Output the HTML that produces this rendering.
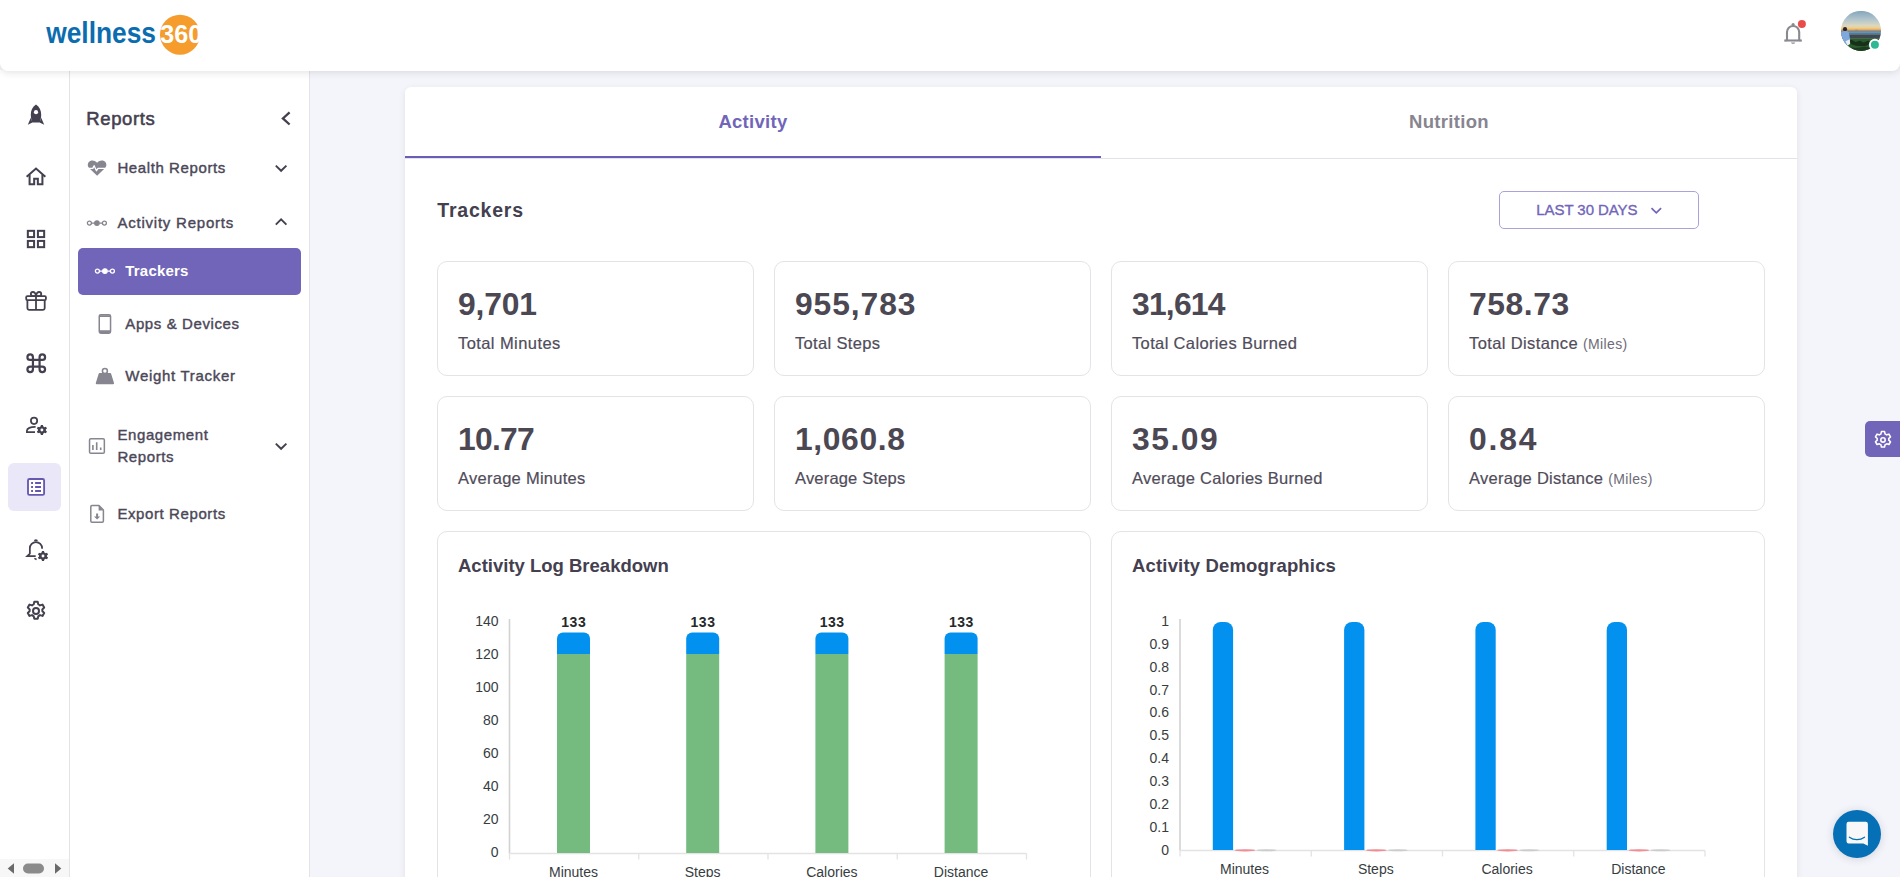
<!DOCTYPE html>
<html lang="en">
<head>
<meta charset="utf-8">
<title>Trackers - Wellness360</title>
<style>
*{box-sizing:border-box;margin:0;padding:0}
html,body{width:1900px;height:877px;overflow:hidden}
body{background:#f4f5fa;font-family:"Liberation Sans",Arial,sans-serif;color:#444050;position:relative}
.abs{position:absolute}
/* header */
#hdr{position:absolute;left:0;top:0;width:1900px;height:71px;background:#fff;border-radius:0 0 8px 8px;box-shadow:0 2px 7px rgba(47,43,61,.12);z-index:10}
/* rail */
#rail{position:absolute;left:0;top:70px;width:70px;height:807px;background:#fff;border-right:1px solid #e4e4e8}
#side{position:absolute;left:70px;top:70px;width:240px;height:807px;background:#fff;border-right:1px solid #e4e4e8}
.ico{position:absolute;width:22px;height:22px;left:25px}
.ico svg{display:block}
/* sidebar menu */
.mi{position:absolute;left:117.400px;font-size:15px;color:#4b4758;white-space:nowrap;letter-spacing:.6px;-webkit-text-stroke:.4px #4b4758}
/* main card */
#card{position:absolute;left:405px;top:87px;width:1392px;height:820px;background:#fff;border-radius:6px;box-shadow:0 2px 6px rgba(47,43,61,.10)}
.tab{position:absolute;top:0;height:71px;width:696px;text-align:center;line-height:69px;font-size:18.500px;font-weight:bold;letter-spacing:.3px}
.stat{position:absolute;width:317px;height:115px;border:1px solid #e4e4e6;border-radius:10px;background:#fff}
.stat b{position:absolute;left:20px;top:24px;font-size:31.500px;line-height:36px;font-weight:bold;color:#4b4753;white-space:nowrap;transform:scaleX(1.01);transform-origin:0 0}
.stat span{position:absolute;left:20px;top:70.100px;font-size:16.500px;line-height:22px;color:#504c5a;white-space:nowrap;-webkit-text-stroke:.2px #504c5a}
.stat span small{font-size:14px;color:#6d6b77;-webkit-text-stroke:0;letter-spacing:.38px;margin-left:0}
.cc{position:absolute;width:654px;height:360px;border:1px solid #e4e4e6;border-radius:10px;background:#fff}
.cc h5{position:absolute;left:20px;top:22px;font-size:18.500px;line-height:24px;font-weight:bold;color:#444050;white-space:nowrap}
svg text{font-family:"Liberation Sans",Arial,sans-serif}
</style>
</head>
<body>
<div id="rail"></div>
<div class="abs" style="left:8px;top:463px;width:53px;height:48px;border-radius:6px;background:#e9e7f8"></div>
<!-- rocket -->
<svg class="abs" style="left:25px;top:103px" width="22" height="24" viewBox="0 0 22 24">
<path d="M11 1.600c3.700 2.400 5.200 6.100 5.200 10.100 0 2.800-.6 5.400-1.500 7.700H7.300c-.9-2.300-1.500-4.900-1.500-7.700 0-4 1.500-7.700 5.200-10.100z" fill="#444050"/>
<circle cx="11" cy="9.200" r="2.100" fill="#fff"/>
<path d="M5.800 14.800l-3 7 4.600-2.400zM16.200 14.800l3 7-4.600-2.400z" fill="#444050"/>
</svg>
<!-- home -->
<svg class="abs" style="left:25px;top:166px" width="22" height="22" viewBox="0 0 24 24" fill="none" stroke="#444050" stroke-width="2.200">
<path d="M1.800 11.800L12 2.800l10.200 9"/>
<path d="M5 9.500V20h5v-6h4v6h5V9.500"/>
</svg>
<!-- grid -->
<svg class="abs" style="left:25px;top:228px" width="22" height="22" viewBox="0 0 24 24" fill="none" stroke="#444050" stroke-width="2.200">
<rect x="3.100" y="3.100" width="6.800" height="6.800"/><rect x="14.100" y="3.100" width="6.800" height="6.800"/><rect x="3.100" y="14.100" width="6.800" height="6.800"/><rect x="14.100" y="14.100" width="6.800" height="6.800"/>
</svg>
<!-- gift -->
<svg class="abs" style="left:20px;top:285px" width="32" height="32" viewBox="0 0 32 32" fill="none" stroke="#444050" stroke-width="1.800" stroke-linejoin="round">
<rect x="6.200" y="11.100" width="19.700" height="4.100" rx="1.100"/>
<path d="M7.400 15.200V23a1.800 1.800 0 0 0 1.800 1.800h13.700A1.800 1.800 0 0 0 24.700 23V15.200"/>
<path d="M16 11.100V24.800"/>
<path d="M16 11.100H12.900a2.050 2.050 0 0 1 0-4.100c1.900 0 2.800 1.900 3.100 4.100zM16 11.100H19.200a2.050 2.050 0 0 0 0-4.100c-1.900 0-2.900 1.900-3.200 4.100z"/>
</svg>
<!-- command -->
<svg class="abs" style="left:22.950px;top:349.750px" width="26.500" height="26.500" viewBox="0 0 24 24" fill="#444050">
<path d="M10 8h4V6.500a3.500 3.500 0 1 1 3.500 3.500H16v4h1.500a3.500 3.500 0 1 1-3.500 3.500V16h-4v1.500A3.500 3.500 0 1 1 6.500 14H8v-4H6.500A3.500 3.500 0 1 1 10 6.500V8zM8 8V6.500A1.500 1.500 0 1 0 6.500 8H8zm0 8H6.500A1.500 1.500 0 1 0 8 17.500V16zm8-8h1.500A1.500 1.500 0 1 0 16 6.500V8zm0 8v1.500a1.500 1.500 0 1 0 1.500-1.500H16zm-6-6v4h4v-4h-4z"/>
</svg>
<!-- user cog -->
<svg class="abs" style="left:20px;top:409px" width="32" height="32" viewBox="0 0 32 32" fill="none" stroke="#444050" stroke-width="1.750">
<circle cx="14.050" cy="11.850" r="3.150"/>
<path d="M15.600 17.900C10.500 17.800 6.900 19.300 6.900 21.800V23.100H15"/>
<g stroke="none" fill="#444050" transform="translate(21.900,21)"><path d="M-1 -5.100h2l.35 1.550c.45.150.850.400 1.200.700l1.500-.500 1 1.750-1.150 1.050c.1.450.1.900 0 1.100l1.150 1.050-1 1.750-1.500-.500c-.350.300-.750.550-1.200.700l-.350 1.550h-2l-.350-1.550c-.450-.150-.850-.400-1.200-.700l-1.500.500-1-1.750 1.150-1.050c-.1-.400-.1-.800 0-1.100l-1.150-1.050 1-1.750 1.500.500c.350-.300.750-.550 1.200-.700zM0 -1.450a1.450 1.450 0 1 0 0 2.900 1.450 1.450 0 0 0 0-2.900z" fill-rule="evenodd"/></g>
</svg>
<!-- report (active) -->
<svg class="abs" style="left:20px;top:471px" width="32" height="32" viewBox="0 0 32 32" fill="none" stroke="#6558b1" stroke-width="1.850">
<rect x="8" y="8" width="16.100" height="15.900" rx="1.500" fill="#fff"/>
<path d="M15.100 12h5.900M15.100 15.950h5.900M15.100 19.950h5.900M11.100 12h1.900M11.100 15.950h1.900M11.100 19.950h1.900"/>
</svg>
<!-- bell cog -->
<svg class="abs" style="left:20px;top:533px" width="32" height="32" viewBox="0 0 32 32" fill="none" stroke="#444050" stroke-width="1.750">
<path d="M13.900 8.300a2 2 0 0 1 4 0z" fill="#444050" stroke="none"/>
<path d="M15.700 23H7.300l2.550-2.400V15.200a6.125 6.125 0 0 1 12.250 0v.6"/>
<path d="M14.400 25.400l2.200 1.100" stroke-width="1.400"/>
<g stroke="none" fill="#444050" transform="translate(23,23)"><path d="M-1 -5.100h2l.35 1.550c.45.150.850.400 1.200.700l1.500-.500 1 1.750-1.150 1.050c.1.450.1.900 0 1.100l1.150 1.050-1 1.750-1.500-.500c-.350.300-.750.550-1.200.700l-.350 1.550h-2l-.350-1.550c-.450-.150-.850-.400-1.200-.700l-1.500.500-1-1.750 1.150-1.050c-.1-.400-.1-.800 0-1.100l-1.150-1.050 1-1.750 1.500.500c.350-.300.750-.550 1.200-.700zM0 -1.450a1.450 1.450 0 1 0 0 2.900 1.450 1.450 0 0 0 0-2.900z" fill-rule="evenodd"/></g>
</svg>
<!-- gear -->
<svg class="abs" style="left:24px;top:599px" width="24" height="24" viewBox="0 0 24 24" fill="none" stroke="#444050" stroke-width="2" stroke-linejoin="round">
<path d="M10.300 2.800h3.400l.6 2.600c.6.200 1.200.6 1.700 1l2.500-.8 1.700 3-1.900 1.800c.1.500.1 1.100 0 1.700l1.900 1.800-1.700 3-2.500-.8c-.5.400-1.100.8-1.700 1l-.6 2.600h-3.400l-.6-2.600c-.6-.2-1.200-.6-1.700-1l-2.500.8-1.700-3 1.900-1.800c-.1-.6-.1-1.200 0-1.700L3.800 8.600l1.700-3 2.500.8c.5-.4 1.100-.8 1.700-1z"/>
<circle cx="12" cy="11.900" r="3"/>
</svg>
<!-- bottom scrollbar -->
<div class="abs" style="left:0;top:859px;width:69px;height:18px;background:#f7f7f8"></div>
<svg class="abs" style="left:0;top:860px" width="69" height="17" viewBox="0 0 69 17">
<path d="M14 3.200v10.600l-6.300-5.300z" fill="#6a6a6a"/>
<path d="M55 3.200v10.600l6.300-5.300z" fill="#6a6a6a"/>
<rect x="23" y="3.500" width="21" height="10" rx="5" fill="#8b8b8b"/>
</svg>
<div id="side"></div>
<div class="abs" style="left:86.300px;top:108px;font-size:18.500px;line-height:22px;color:#444050;-webkit-text-stroke:.55px #444050;letter-spacing:.62px">Reports</div>
<svg class="abs" style="left:276px;top:106px" width="20" height="25" viewBox="0 0 20 25" fill="none" stroke="#444050" stroke-width="2.300"><path d="M13.600 6.300L6.900 12.400l6.700 6.100"/></svg>

<!-- health reports -->
<svg class="abs" style="left:86px;top:158px" width="22" height="20" viewBox="0 0 22 20">
<path d="M11.100 17.800L3.300 10.300C.9 7.900 1.500 4.300 4.300 3c2.100-1 4.700-.4 6.800 1.700C13.200 2.600 15.800 2 17.900 3c2.800 1.300 3.400 4.900 1 7.300z" fill="#87858f"/>
<path d="M1.500 10.400h5.300l1.300-2.700 2.400 5 1.500-2.300h8.500" fill="none" stroke="#fff" stroke-width="1.300" stroke-linejoin="round"/>
</svg>
<div class="mi" style="top:157px;line-height:22px">Health Reports</div>
<svg class="abs" style="left:273px;top:160px" width="16" height="16" viewBox="0 0 16 16" fill="none" stroke="#444050" stroke-width="1.900"><path d="M2.800 5.600L8.100 10.800l5.300-5.200"/></svg>

<!-- activity reports -->
<svg class="abs" style="left:85px;top:217px" width="24" height="12" viewBox="0 0 24 12" fill="none" stroke="#87858f" stroke-width="1.300">
<path d="M6.400 6.100h3M14.400 6.100h3"/>
<circle cx="4.400" cy="6.100" r="2"/><circle cx="19.400" cy="6.100" r="2"/><circle cx="11.900" cy="6.100" r="2.300" fill="#87858f"/>
</svg>
<div class="mi" style="top:211.500px;line-height:22px;letter-spacing:.78px">Activity Reports</div>
<svg class="abs" style="left:273px;top:214px" width="16" height="16" viewBox="0 0 16 16" fill="none" stroke="#444050" stroke-width="1.900"><path d="M2.800 10.600L8.100 5.400l5.300 5.200"/></svg>

<!-- trackers (active) -->
<div class="abs" style="left:78px;top:248px;width:223px;height:47px;border-radius:5px;background:#7165b9"></div>
<svg class="abs" style="left:93px;top:265px" width="24" height="12" viewBox="0 0 24 12" fill="none" stroke="#fff" stroke-width="1.300">
<path d="M6.400 6.100h3M14.400 6.100h3"/>
<circle cx="4.400" cy="6.100" r="2"/><circle cx="19.400" cy="6.100" r="2"/><circle cx="11.900" cy="6.100" r="2.300" fill="#fff"/>
</svg>
<div class="mi" style="left:125.300px;top:260px;line-height:22px;color:#fff;font-weight:bold;letter-spacing:.2px;-webkit-text-stroke:0">Trackers</div>

<!-- apps & devices -->
<svg class="abs" style="left:96px;top:312px" width="18" height="24" viewBox="0 0 18 24" fill="none">
<rect x="3.250" y="2.650" width="11.300" height="18.500" rx="1.600" stroke="#87858f" stroke-width="1.500"/>
<path d="M3.300 3.200h11.200v1.800H3.300zM3.300 18.200h11.200v2.800H3.300z" fill="#87858f"/>
</svg>
<div class="mi" style="left:125.300px;top:313px;line-height:22px">Apps &amp; Devices</div>

<!-- weight tracker -->
<svg class="abs" style="left:94px;top:366px" width="22" height="20" viewBox="0 0 22 20">
<circle cx="10.900" cy="5.100" r="2.500" fill="none" stroke="#87858f" stroke-width="1.500"/>
<path d="M5.600 7.100h10.600c.5 0 .9.300 1 .8l2.800 9.200c.2.600-.2 1.100-.8 1.100H2.600c-.6 0-1-.5-.8-1.100l2.800-9.200c.1-.5.500-.8 1-.8z" fill="#87858f"/>
</svg>
<div class="mi" style="left:125.300px;top:364.700px;line-height:22px;letter-spacing:.7px">Weight Tracker</div>

<!-- engagement reports -->
<svg class="abs" style="left:87px;top:436px" width="20" height="20" viewBox="0 0 20 20" fill="none" stroke="#87858f" stroke-width="1.500">
<rect x="2.550" y="2.650" width="14.800" height="14.700" rx="1.300"/>
<path d="M5.900 9v5M9.700 6.200V14M13.700 11.500V14" stroke-width="1.600"/>
</svg>
<div class="mi" style="top:423.700px;line-height:22px">Engagement<br>Reports</div>
<svg class="abs" style="left:273px;top:438px" width="16" height="16" viewBox="0 0 16 16" fill="none" stroke="#444050" stroke-width="1.900"><path d="M2.800 5.600L8.100 10.800l5.300-5.200"/></svg>

<!-- export reports -->
<svg class="abs" style="left:87px;top:503px" width="20" height="22" viewBox="0 0 20 22" fill="none" stroke="#87858f" stroke-width="1.500" stroke-linejoin="round">
<path d="M5 2.600h7l4.400 4.400v11a1.200 1.200 0 0 1-1.200 1.200H5a1.200 1.200 0 0 1-1.200-1.200V3.800A1.200 1.200 0 0 1 5 2.600z"/>
<path d="M11.600 2.800v4.600h4.600z" fill="#87858f" stroke="none"/>
<path d="M9.100 10.600h2v3h2.100l-3.100 3-3.100-3h2.100z" fill="#87858f" stroke="none"/>
</svg>
<div class="mi" style="top:503px;line-height:22px">Export Reports</div>

<div id="hdr">
<svg class="abs" style="left:40px;top:8px" width="170" height="54" viewBox="40 8 170 54">
<circle cx="180" cy="34.7" r="20" fill="#f59c2d"/>
<text x="46.2" y="42.6" font-size="30" font-weight="bold" fill="#0b6cb0" textLength="109.8" lengthAdjust="spacingAndGlyphs">wellness</text>
<text x="160.3" y="42.6" font-size="25" font-weight="bold" fill="#ffffff" textLength="42" lengthAdjust="spacingAndGlyphs">360</text>
</svg>
<svg class="abs" style="left:1780px;top:16px" width="30" height="32" viewBox="1780 16 30 32" fill="none">
<path d="M1787 40.600V32.100a6.100 6.100 0 0 1 12.200 0V40.600" stroke="#8b8990" stroke-width="2.100"/>
<path d="M1784.300 40.500H1801.800" stroke="#8b8990" stroke-width="2.100"/>
<path d="M1786 39.700l-1.700 1.600h3zM1800.200 39.700l1.700 1.600h-3z" fill="#8b8990"/>
<circle cx="1793.100" cy="24.600" r="1.600" fill="#8b8990"/>
<path d="M1790.800 42.500h4.600l-1.200 1.300h-2.200z" fill="#8b8990"/>
<circle cx="1801.900" cy="23.900" r="4" fill="#ea4c4c"/>
</svg>
<svg class="abs" style="left:1840px;top:10px" width="44" height="44" viewBox="-1 -.850 44 44">
<defs>
<clipPath id="avc"><circle cx="20" cy="20" r="20.050"/></clipPath>
<linearGradient id="sky" x1="0" y1="0" x2="0" y2="40" gradientUnits="userSpaceOnUse">
<stop offset="0" stop-color="#82a6bd"/><stop offset=".22" stop-color="#b3c5cc"/><stop offset=".37" stop-color="#dbd8c0"/><stop offset=".43" stop-color="#ecd08e"/><stop offset=".48" stop-color="#e99f50"/><stop offset=".5" stop-color="#c98a5c"/>
</linearGradient>
</defs>
<g clip-path="url(#avc)">
<rect x="0" y="0" width="40" height="20.200" fill="url(#sky)"/>
<rect x="0" y="19.900" width="40" height="3.800" fill="#507d9c"/>
<rect x="0" y="20.800" width="40" height=".8" fill="#93bcd0" opacity=".8"/>
<rect x="14" y="18.900" width="3" height="1.100" fill="#a9866a"/>
<rect x="0" y="23.500" width="40" height="4.200" fill="#3d4850"/>
<rect x="0" y="27.400" width="40" height="13" fill="#2b5a2c"/>
<path d="M9 29.500c2-1 4 .5 5 1.500s3-1.500 5-1 2 2 4 1.500 3-2 5-1.500l2 2.500-6 3-9-.5-6-2z" fill="#16301a"/>
<path d="M6 36c4 1 9 1.500 14 .5s8 0 12 1v3h-26z" fill="#1c3c20"/>
<circle cx="4" cy="18.300" r="2.100" fill="#2b2424"/>
<path d="M.3 21.200c2.500-1.400 6-1.200 7.600.2l1.100 6.800-1.600 5.600-4.500 1.500-3.500-6z" fill="#7fa9dd"/>
<path d="M4.500 30.500l4.300-2 .4 4.500-2.600 1.800z" fill="#e8eef6"/>
</g>
<circle cx="33.900" cy="34" r="5" fill="#2fb893" stroke="#fff" stroke-width="2"/>
</svg>
</div>
<div id="card">
<div class="tab" style="left:0;color:#7165b9">Activity</div>
<div class="tab" style="left:696px;color:#87858f">Nutrition</div>
<div class="abs" style="left:0;top:71px;width:1392px;height:1px;background:#e3e2e6"></div>
<div class="abs" style="left:0;top:69px;width:696px;height:2px;background:#6a5db5"></div>
</div>
<div class="abs" style="left:437.300px;top:198px;font-size:19.500px;line-height:24px;font-weight:bold;color:#444050;letter-spacing:.78px">Trackers</div>
<div class="abs" style="left:1499px;top:191px;width:200px;height:38px;border:1px solid #aaa3da;border-radius:5px;background:#fff"></div>
<div class="abs" style="left:1536.300px;top:199px;font-size:15px;line-height:22px;color:#7165b9;letter-spacing:-.07px;-webkit-text-stroke:.35px #7165b9;white-space:nowrap">LAST 30 DAYS</div>
<svg class="abs" style="left:1648px;top:203px" width="16" height="16" viewBox="0 0 16 16" fill="none" stroke="#7165b9" stroke-width="1.700"><path d="M3.500 5.200L8.300 9.900l4.800-4.700"/></svg>
<div class="stat" style="left:437px;top:261px"><b style="letter-spacing:-0.14px">9,701</b><span style="letter-spacing:0.42px">Total Minutes</span></div>
<div class="stat" style="left:774px;top:261px"><b style="letter-spacing:0.91px">955,783</b><span style="letter-spacing:0.34px">Total Steps</span></div>
<div class="stat" style="left:1111px;top:261px"><b style="letter-spacing:-0.76px">31,614</b><span style="letter-spacing:0.36px">Total Calories Burned</span></div>
<div class="stat" style="left:1448px;top:261px"><b style="letter-spacing:0.55px">758.73</b><span style="letter-spacing:0.38px">Total Distance <small>(Miles)</small></span></div>
<div class="stat" style="left:437px;top:396px"><b style="letter-spacing:-0.73px">10.77</b><span style="letter-spacing:0.27px">Average Minutes</span></div>
<div class="stat" style="left:774px;top:396px"><b style="letter-spacing:0.61px">1,060.8</b><span style="letter-spacing:0.19px">Average Steps</span></div>
<div class="stat" style="left:1111px;top:396px"><b style="letter-spacing:1.53px">35.09</b><span style="letter-spacing:0.29px">Average Calories Burned</span></div>
<div class="stat" style="left:1448px;top:396px"><b style="letter-spacing:1.82px">0.84</b><span style="letter-spacing:0.27px">Average Distance <small>(Miles)</small></span></div>
<div class="cc" style="left:437px;top:531px"><h5 style="letter-spacing:0">Activity Log Breakdown</h5></div>
<div class="cc" style="left:1111px;top:531px"><h5 style="letter-spacing:.17px">Activity Demographics</h5></div>
<svg class="abs" style="left:438px;top:590px" width="652" height="287" viewBox="438 590 652 287">
<path d="M509.5 619V853.5" stroke="#d2d2d2" stroke-width="1.600" fill="none"/>
<path d="M509.5 853.5H1026.500" stroke="#e3e3e3" stroke-width="1.400" fill="none"/>
<path d="M509.5 853.5v6M638.75 853.5v6M768 853.5v6M897.25 853.5v6M1026.5 853.5v6" stroke="#e3e3e3" stroke-width="1.300" fill="none"/>
<g font-size="14" fill="#373d3f" text-anchor="end">
<text x="498.500" y="625.8">140</text><text x="498.500" y="658.87">120</text><text x="498.500" y="691.94">100</text><text x="498.500" y="725.01">80</text><text x="498.500" y="758.09">60</text><text x="498.500" y="791.16">40</text><text x="498.500" y="824.23">20</text><text x="498.500" y="857.3">0</text>
</g>
<rect x="557" y="654.0" width="33" height="199" fill="#75bb80"/><path d="M557 654.0V638.5a6 6 0 0 1 6-6h21a6 6 0 0 1 6 6V654.0z" fill="#0391ef"/>
<rect x="686.2" y="654.0" width="33" height="199" fill="#75bb80"/><path d="M686.2 654.0V638.5a6 6 0 0 1 6-6h21a6 6 0 0 1 6 6V654.0z" fill="#0391ef"/>
<rect x="815.4" y="654.0" width="33" height="199" fill="#75bb80"/><path d="M815.4 654.0V638.5a6 6 0 0 1 6-6h21a6 6 0 0 1 6 6V654.0z" fill="#0391ef"/>
<rect x="944.6" y="654.0" width="33" height="199" fill="#75bb80"/><path d="M944.6 654.0V638.5a6 6 0 0 1 6-6h21a6 6 0 0 1 6 6V654.0z" fill="#0391ef"/>
<g font-size="14" font-weight="bold" fill="#25292b" text-anchor="middle" letter-spacing=".55">
<text x="573.8" y="627">133</text><text x="703" y="627">133</text><text x="832.2" y="627">133</text><text x="961.4" y="627">133</text>
</g>
<g font-size="14" fill="#373d3f" text-anchor="middle">
<text x="573.5" y="877.400">Minutes</text><text x="702.7" y="877.400">Steps</text><text x="831.9" y="877.400">Calories</text><text x="961.1" y="877.400">Distance</text>
</g>
</svg>
<svg class="abs" style="left:1112px;top:590px" width="652" height="287" viewBox="1112 590 652 287">
<path d="M1180.0 619V850.5" stroke="#d2d2d2" stroke-width="1.600" fill="none"/>
<path d="M1180.0 850.5H1705" stroke="#e3e3e3" stroke-width="1.400" fill="none"/>
<path d="M1180 850.5v6M1311.25 850.5v6M1442.5 850.5v6M1573.75 850.5v6M1705 850.5v6" stroke="#e3e3e3" stroke-width="1.300" fill="none"/>
<g font-size="14" fill="#373d3f" text-anchor="end">
<text x="1169" y="625.8">1</text><text x="1169" y="648.7">0.9</text><text x="1169" y="671.6">0.8</text><text x="1169" y="694.5">0.7</text><text x="1169" y="717.4">0.6</text><text x="1169" y="740.3">0.5</text><text x="1169" y="763.2">0.4</text><text x="1169" y="786.1">0.3</text><text x="1169" y="809">0.2</text><text x="1169" y="831.9">0.1</text><text x="1169" y="854.8">0</text>
</g>
<path d="M1212.8 850V630a8 8 0 0 1 8-8h4.300a8 8 0 0 1 8 8V850z" fill="#0391ef"/><ellipse cx="1245" cy="850.300" rx="10.200" ry="1.100" fill="#f28b93"/><ellipse cx="1266.6" cy="850.300" rx="9.800" ry="1" fill="#cccccc"/>
<path d="M1344.1 850V630a8 8 0 0 1 8-8h4.300a8 8 0 0 1 8 8V850z" fill="#0391ef"/><ellipse cx="1376.3" cy="850.300" rx="10.200" ry="1.100" fill="#f28b93"/><ellipse cx="1397.9" cy="850.300" rx="9.800" ry="1" fill="#cccccc"/>
<path d="M1475.4 850V630a8 8 0 0 1 8-8h4.300a8 8 0 0 1 8 8V850z" fill="#0391ef"/><ellipse cx="1507.6" cy="850.300" rx="10.200" ry="1.100" fill="#f28b93"/><ellipse cx="1529.2" cy="850.300" rx="9.800" ry="1" fill="#cccccc"/>
<path d="M1606.7 850V630a8 8 0 0 1 8-8h4.300a8 8 0 0 1 8 8V850z" fill="#0391ef"/><ellipse cx="1638.9" cy="850.300" rx="10.200" ry="1.100" fill="#f28b93"/><ellipse cx="1660.5" cy="850.300" rx="9.800" ry="1" fill="#cccccc"/>
<g font-size="14" fill="#373d3f" text-anchor="middle">
<text x="1244.5" y="874">Minutes</text><text x="1375.8" y="874">Steps</text><text x="1507.1" y="874">Calories</text><text x="1638.4" y="874">Distance</text>
</g>
</svg>
<!-- settings tab -->
<div class="abs" style="left:1865px;top:421px;width:35px;height:36px;border-radius:5px 0 0 5px;background:#7165b9"></div>
<svg class="abs" style="left:1872px;top:428.500px" width="22" height="22" viewBox="0 0 24 24" fill="none" stroke="#fff" stroke-width="1.700" stroke-linejoin="round">
<path d="M10.300 2.800h3.400l.6 2.600c.6.200 1.200.6 1.700 1l2.500-.8 1.700 3-1.900 1.800c.1.500.1 1.100 0 1.700l1.900 1.800-1.700 3-2.500-.8c-.5.400-1.100.8-1.700 1l-.6 2.600h-3.400l-.6-2.600c-.6-.2-1.200-.6-1.700-1l-2.500.8-1.700-3 1.900-1.800c-.1-.6-.1-1.200 0-1.700L3.800 8.600l1.700-3 2.500.8c.5-.4 1.100-.8 1.700-1z"/>
<circle cx="12" cy="11.900" r="2.400"/>
</svg>
<!-- chat -->
<div class="abs" style="left:1833px;top:810px;width:48px;height:48px;border-radius:50%;background:#0570b5;box-shadow:0 1px 9px rgba(40,40,60,.16)"></div>
<svg class="abs" style="left:1840px;top:815px" width="34" height="36" viewBox="1840 815 34 36">
<path d="M1848.700 821.800h17a2.200 2.200 0 0 1 2.200 2.200v21.800l-4.600-2.300h-14.600a2.200 2.200 0 0 1-2.200-2.200v-17.300a2.200 2.200 0 0 1 2.200-2.200z" fill="#f8f8f8"/>
<path d="M1849.400 837.200c4.400 3.300 10.700 3.300 15.100 0" fill="none" stroke="#0570b5" stroke-width="1.250" stroke-linecap="round"/>
</svg>
</body>
</html>
